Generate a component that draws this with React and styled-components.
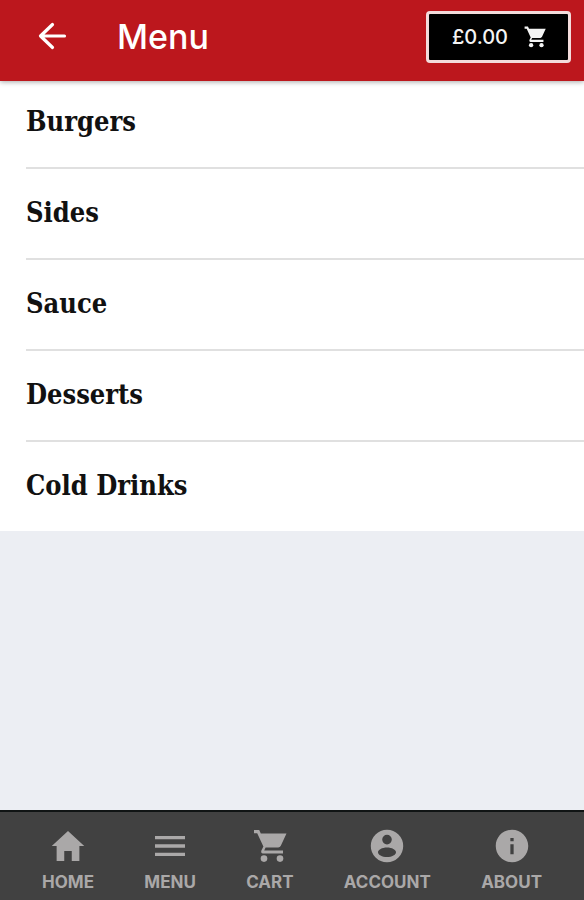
import styled, { createGlobalStyle } from "styled-components";
import { IoMdHome, IoMdInformationCircle, IoMdMenu } from "react-icons/io";

const categories = ["Burgers", "Sides", "Sauce", "Desserts", "Cold Drinks"];

const tabs = [
  { label: "HOME", icon: IoMdHome },
  { label: "MENU", icon: IoMdMenu },
  { label: "CART", icon: CartIcon },
  { label: "ACCOUNT", icon: AccountIcon },
  { label: "ABOUT", icon: IoMdInformationCircle },
];

export default function App() {
  return (
    <>
      <GlobalStyle />
      <Page>
        <Header>
          <BackButton type="button" aria-label="Back">
            <BackIcon size={40} />
          </BackButton>
          <Title>Menu</Title>
          <CartButton type="button">
            £0.00
            <CartIcon size={26} />
          </CartButton>
        </Header>

        <Main>
          <CategoryList>
            {categories.map((category) => (
              <Category key={category}>
                <CategoryLink href="#">{category}</CategoryLink>
              </Category>
            ))}
          </CategoryList>
        </Main>

        <TabBar>
          {tabs.map(({ label, icon: Icon }) => (
            <Tab key={label} href="#">
              <Icon size={40} />
              {label}
            </Tab>
          ))}
        </TabBar>
      </Page>
    </>
  );
}

function BackIcon({ size }) {
  return (
    <svg
      width={size}
      height={size}
      viewBox="0 0 40 40"
      fill="none"
      stroke="currentColor"
      strokeWidth="3.2"
      strokeLinecap="round"
      strokeLinejoin="round"
      aria-hidden="true"
    >
      <path d="M32.5 19H8.5M20.5 7.5L8.5 19L20.5 30.5" />
    </svg>
  );
}

function CartIcon({ size }) {
  return (
    <svg
      width={size}
      height={size}
      viewBox="0 0 40 40"
      fill="currentColor"
      aria-hidden="true"
    >
      <path d="M4 4H9.2L10.8 7.4H36.5L30.8 19.8Q30 21.4 28.2 21.4H15.6L14.2 24.4H33V27.6H13Q10.4 27.2 11.4 24.6L13.4 20.6L7.2 7.2H4Z" />
      <circle cx="14" cy="32.6" r="3.3" />
      <circle cx="30" cy="32.6" r="3.3" />
    </svg>
  );
}

function AccountIcon({ size }) {
  return (
    <svg
      width={size}
      height={size}
      viewBox="0 0 40 40"
      fill="currentColor"
      fillRule="evenodd"
      aria-hidden="true"
    >
      <path d="M20 3.8a16.2 16.2 0 1 0 0 32.4a16.2 16.2 0 1 0 0-32.4ZM20 8.8a4.8 4.8 0 1 1 0 9.6a4.8 4.8 0 1 1 0-9.6ZM20 21.4c5 0 9 2.2 9 4.8s-4 4.8-9 4.8s-9-2.2-9-4.8s4-4.8 9-4.8Z" />
    </svg>
  );
}

const GlobalStyle = createGlobalStyle`
  * {
    box-sizing: border-box;
  }

  body {
    margin: 0;
    font-family: Inter, sans-serif;
    background: #eceef3;
  }
`;

const Page = styled.div`
  min-height: 100vh;
  display: flex;
  flex-direction: column;
`;

const Header = styled.header`
  position: relative;
  z-index: 1;
  display: flex;
  align-items: center;
  padding: 11px 13px 18px 32px;
  color: #fff;
  background: #bc171d;
  box-shadow: 0 1px 5px rgba(0, 0, 0, 0.35);
`;

const BackButton = styled.button`
  display: flex;
  padding: 0;
  border: none;
  color: inherit;
  background: none;
  cursor: pointer;
`;

const Title = styled.h1`
  flex: 1;
  margin: 0 0 0 45px;
  font-size: 34px;
  font-weight: 500;
  line-height: 40px;
`;

const CartButton = styled.button`
  display: flex;
  align-items: center;
  gap: 14px;
  height: 52px;
  padding: 0 20px 0 23px;
  border: 3px solid #f3dcdc;
  border-radius: 4px;
  font-family: inherit;
  font-size: 20px;
  font-weight: 500;
  color: #f4f4f4;
  background: #000;
  cursor: pointer;
`;

const Main = styled.main`
  flex: 1;
`;

/* the first row is tucked slightly under the header shadow */
const CategoryList = styled.ul`
  margin: -3px 0 0;
  padding: 0 0 0 26px;
  list-style: none;
  background: #fff;
`;

const Category = styled.li`
  & + & {
    border-top: 2px solid #e0e0e0;
  }
`;

const CategoryLink = styled.a`
  display: flex;
  align-items: center;
  height: 89px;
  padding-bottom: 2px;
  font-family: "DejaVu Serif Condensed", "DejaVu Serif", serif;
  font-size: 27px;
  font-weight: 700;
  color: #111;
  text-decoration: none;
`;

const TabBar = styled.nav`
  display: flex;
  justify-content: space-between;
  padding: 14px 42px 8px;
  border-top: 2px solid #101414;
  background: #414141;
`;

const Tab = styled.a`
  display: flex;
  flex-direction: column;
  align-items: center;
  gap: 6px;
  font-size: 17px;
  font-weight: 700;
  line-height: 20px;
  color: #aaa8a8;
  text-decoration: none;
`;
